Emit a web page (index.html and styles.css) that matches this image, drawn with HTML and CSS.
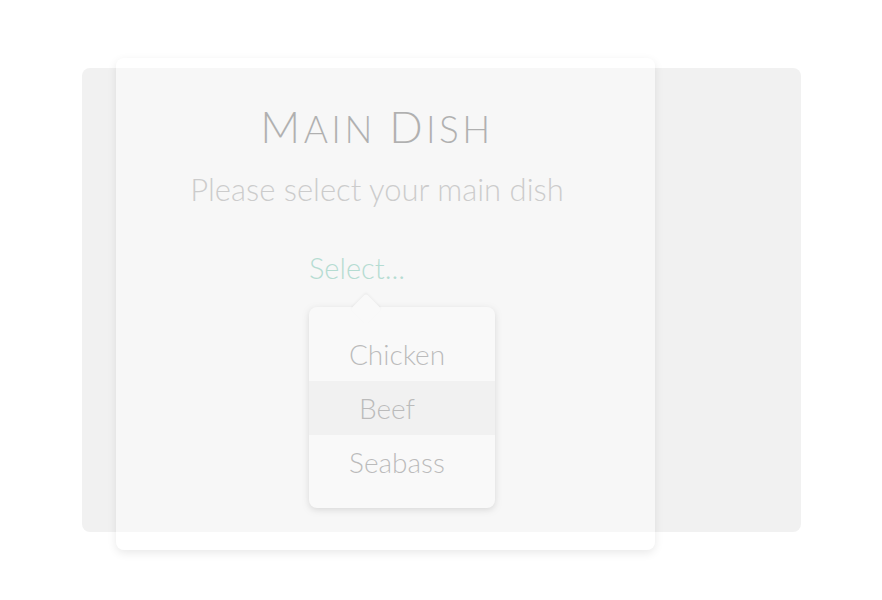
FILE: index.html
```html
<!DOCTYPE html>
<html>
<head>
<meta charset="utf-8">
<link rel="stylesheet" href="styles.css">
</head>
<body>
<div class="backdrop">
  <div class="card">
    <div class="content">
      <h1 class="title"><span class="big">M</span>ain <span class="big">D</span>ish</h1>
      <p class="subtitle">Please select your main dish</p>
      <div class="select">
        <div class="select-label">Select...</div>
        <div class="menu">
          <div class="arrow"></div>
          <ul class="options">
            <li class="option">Chicken</li>
            <li class="option active">Beef</li>
            <li class="option">Seabass</li>
          </ul>
        </div>
      </div>
    </div>
  </div>
</div>
</body>
</html>
```
FILE: styles.css
```css
html, body {
  margin: 0;
  padding: 0;
  background: #ffffff;
  font-family: Lato, "Open Sans", sans-serif;
}
body {
  min-height: 600px;
  overflow: hidden;
}
.backdrop {
  position: relative;
  margin: 68px 0 0 82px;
  width: 719px;
  height: 464px;
  background: #f1f1f1;
  border-radius: 8px;
}
.card {
  position: absolute;
  left: 34px;
  top: -10px;
  width: 539px;
  height: 492px;
  background: rgba(255, 255, 255, 0.42);
  border-radius: 8px;
  box-shadow: 0 3px 10px rgba(0, 0, 0, 0.09);
  box-sizing: border-box;
  padding-top: 47px;
  padding-right: 17px;
  text-align: center;
}
.content {
  opacity: 0.3;
}
.title {
  margin: 0;
  font-weight: 300;
  font-size: 37px;
  line-height: 43px;
  letter-spacing: 3.4px;
  text-transform: uppercase;
  color: #111111;
}
.title .big {
  font-size: 44px;
}
.subtitle {
  margin: 21px 0 0;
  font-weight: 300;
  font-size: 31px;
  line-height: 37px;
  color: #6a6a6a;
}
.select {
  margin: 43px 0 0 193px;
  width: 186px;
  text-align: left;
}
.select-label {
  font-weight: 300;
  font-size: 29px;
  line-height: 34px;
  color: #20a080;
}
.menu {
  position: relative;
  margin-top: 22px;
  width: 186px;
  height: 201px;
  background: #ffffff;
  border-radius: 8px;
  box-shadow: 0 2px 6px rgba(0, 0, 0, 0.4);
}
.arrow {
  position: absolute;
  left: 46px;
  top: -9px;
  width: 22px;
  height: 22px;
  background: #ffffff;
  border-radius: 3px;
  transform: rotate(45deg);
  box-shadow: -1px -1px 2px rgba(0, 0, 0, 0.14);
}
.options {
  position: relative;
  list-style: none;
  margin: 0;
  padding: 20px 0 0;
}
.option {
  height: 54px;
  line-height: 54px;
  text-align: center;
  padding-right: 10px;
  font-weight: 300;
  font-size: 28px;
  color: #333333;
}
.option.active {
  background: #e4e4e4;
  text-align: left;
  padding-left: 50px;
}
```
